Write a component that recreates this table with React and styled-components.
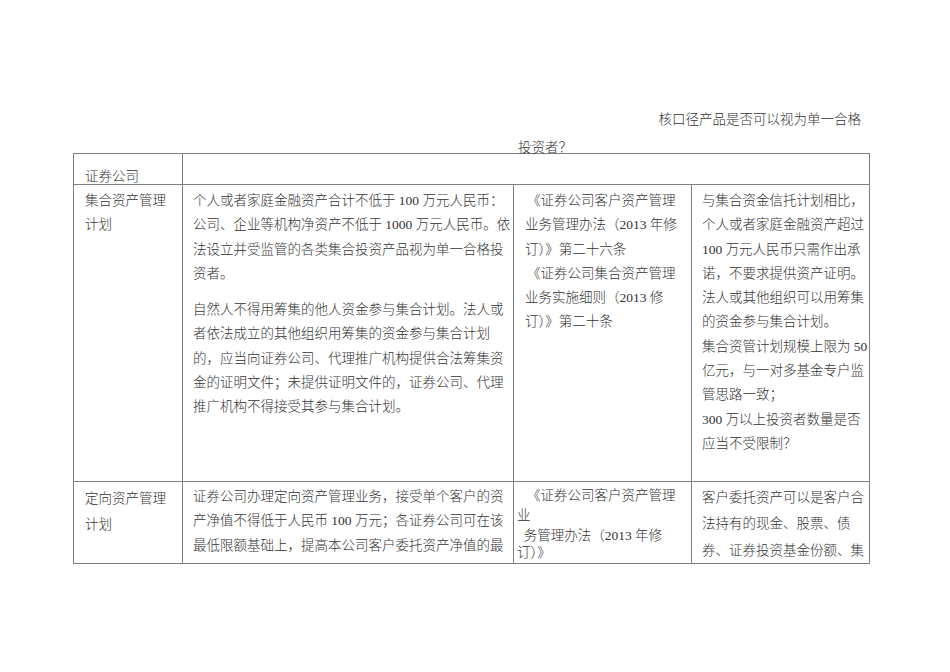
import React from "react";
import styled, { createGlobalStyle } from "styled-components";

const GlobalStyle = createGlobalStyle`
  html, body {
    margin: 0;
    padding: 0;
    background: #ffffff;
  }
  body {
    font-family: "Liberation Serif", "Noto Sans CJK SC", serif;
    font-size: 13.5px;
    color: #333333;
  }
  * { box-sizing: border-box; }
`;

const Page = styled.div`
  width: 950px;
  height: 672px;
  padding: 108px 0 0 73px;
  overflow: hidden;
`;

const Heading = styled.div`
  width: 797px;
  font-weight: 300;
`;

const TitleLine = styled.div`
  line-height: 24px;
  height: 24px;
  text-align: right;
  padding-right: 9px;
  white-space: nowrap;
`;

const TitleTail = styled.div`
  line-height: 10px;
  height: 10px;
  margin-top: 11px;
  padding-left: 445px;
  white-space: nowrap;
`;

const Table = styled.div`
  display: grid;
  width: 797px;
  grid-template-columns: 109px 331px 178px 178px;
  grid-template-rows: 31px 297px 82px;
  border-top: 1px solid #808080;
  border-left: 1px solid #808080;
`;

const Cell = styled.div`
  grid-column: span ${(p) => p.$span || 1};
  border-right: 1px solid #808080;
  border-bottom: 1px solid #808080;
  padding-left: ${(p) => p.$pl ?? 10}px;
  padding-top: ${(p) => p.$pt ?? 4}px;
  overflow: hidden;
  font-weight: 300;
`;

const Paragraph = styled.div`
  margin-top: ${(p) => p.$gap ?? 0}px;
`;

const Line = styled.div`
  line-height: ${(p) => p.$lh ?? 24.3}px;
  height: ${(p) => p.$lh ?? 24.3}px;
  white-space: pre;
  padding-left: ${(p) => p.$indent ?? 0}px;
`;

const Lines = ({ items, lh }) =>
  items.map((t, i) => {
    const item = typeof t === "string" ? { t } : t;
    return (
      <Line key={i} $lh={item.lh ?? lh} $indent={item.indent}>
        {item.t}
      </Line>
    );
  });

export default function App() {
  return (
    <>
      <GlobalStyle />
      <Page>
        <Heading>
          <TitleLine>核口径产品是否可以视为单一合格</TitleLine>
          <TitleTail>投资者？</TitleTail>
        </Heading>
        <Table>
          <Cell $pl={11} $pt={11}>
            <Lines items={["证券公司"]} />
          </Cell>
          <Cell $span={3} />

          <Cell $pl={11}>
            <Lines items={["集合资产管理", "计划"]} />
          </Cell>
          <Cell $pl={10}>
            <Paragraph>
              <Lines
                items={[
                  "个人或者家庭金融资产合计不低于 100 万元人民币：",
                  "公司、企业等机构净资产不低于 1000 万元人民币。依",
                  "法设立并受监管的各类集合投资产品视为单一合格投",
                  "资者。",
                ]}
              />
            </Paragraph>
            <Paragraph $gap={12}>
              <Lines
                items={[
                  "自然人不得用筹集的他人资金参与集合计划。法人或",
                  "者依法成立的其他组织用筹集的资金参与集合计划",
                  "的，应当向证券公司、代理推广机构提供合法筹集资",
                  "金的证明文件；未提供证明文件的，证券公司、代理",
                  "推广机构不得接受其参与集合计划。",
                ]}
              />
            </Paragraph>
          </Cell>
          <Cell $pl={11}>
            <Lines
              items={[
                { t: "《证券公司客户资产管理", indent: 2 },
                "业务管理办法（2013 年修",
                "订）》第二十六条",
                { t: "《证券公司集合资产管理", indent: 2 },
                "业务实施细则（2013 修",
                "订）》第二十条",
              ]}
            />
          </Cell>
          <Cell $pl={10}>
            <Lines
              items={[
                "与集合资金信托计划相比，",
                "个人或者家庭金融资产超过",
                "100 万元人民币只需作出承",
                "诺，不要求提供资产证明。",
                "法人或其他组织可以用筹集",
                "的资金参与集合计划。",
                "集合资管计划规模上限为 50",
                "亿元，与一对多基金专户监",
                "管思路一致；",
                "300 万以上投资者数量是否",
                "应当不受限制？",
              ]}
            />
          </Cell>

          <Cell $pl={11} $pt={4}>
            <Lines items={["定向资产管理", "计划"]} lh={26} />
          </Cell>
          <Cell $pl={10} $pt={3}>
            <Lines
              items={[
                "证券公司办理定向资产管理业务，接受单个客户的资",
                "产净值不得低于人民币 100 万元；各证券公司可在该",
                "最低限额基础上，提高本公司客户委托资产净值的最",
              ]}
            />
          </Cell>
          <Cell $pl={3} $pt={4}>
            <Lines
              items={[
                { t: "《证券公司客户资产管理", indent: 10, lh: 20 },
                { t: "业", lh: 19 },
                { t: "  务管理办法（2013 年修", lh: 22 },
                { t: "订）》", lh: 12 },
              ]}
            />
          </Cell>
          <Cell $pl={10} $pt={3}>
            <Lines
              items={[
                "客户委托资产可以是客户合",
                "法持有的现金、股票、债",
                "券、证券投资基金份额、集",
              ]}
              lh={26.3}
            />
          </Cell>
        </Table>
      </Page>
    </>
  );
}
